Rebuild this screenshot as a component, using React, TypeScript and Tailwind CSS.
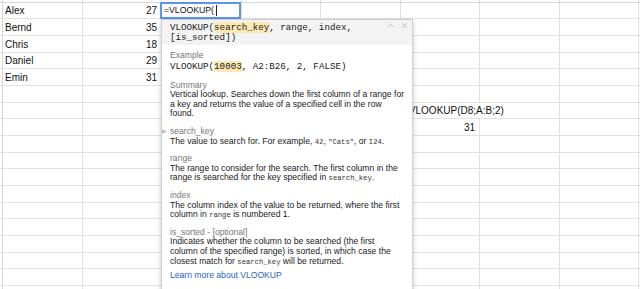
import { ChevronUp, X } from "lucide-react";

const colW = [
  "w-[3px]",
  "w-[80px]",
  "w-[79px]",
  "w-[80px]",
  "w-[79px]",
  "w-[80px]",
  "w-[79px]",
  "w-[80px]",
  "w-[79px]",
  "w-[40px]",
];

const rowH = ["h-[16px]", "h-[17px]", "h-[17px]"];

const people: Record<number, [string, string]> = {
  1: ["Alex", "27"],
  2: ["Bernd", "35"],
  3: ["Chris", "18"],
  4: ["Daniel", "29"],
  5: ["Emin", "31"],
};

function Code({ children }: { children: React.ReactNode }) {
  return (
    <span className="font-['Liberation_Mono',monospace] text-[7.2px] leading-none text-[#333]">{children}</span>
  );
}

function Section({ label, children, arrow }: { label: string; children: React.ReactNode; arrow?: boolean }) {
  return (
    <div className="relative mt-[8px]">
      {arrow && <span className="absolute left-[-8px] top-0 text-[6px] text-[#bbb]">▶</span>}
      <div className="text-[#777]">{label}</div>
      {children}
    </div>
  );
}

function Sheet() {
  const rows = Array.from({ length: 18 }, (_, i) => i);
  return (
    <div className="flex flex-col">
      {/* top strip */}
      <div className="flex h-[3px]">
        {colW.map((w, c) => (
          <div key={c} className={`${w} shrink-0 border-b border-r border-[#d6d6d6]`} />
        ))}
      </div>
      {rows.map((r) => {
        const row = r + 1;
        const h = rowH[r % 3];
        const cells = [];
        for (let c = 0; c < colW.length; c++) {
          if (row === 7 && c === 6) {
            // formula text overflows into the next column
            cells.push(
              <div key={c} className="w-[159px] shrink-0 border-b border-r border-[#e2e2e2] flex items-center pl-[2px] whitespace-nowrap">
                =VLOOKUP(D8;A:B;2)
              </div>
            );
            c++;
            continue;
          }
          let content: React.ReactNode = null;
          let align = "justify-start pl-[2px]";
          if (people[row] && c === 1) content = people[row][0];
          if (people[row] && c === 2) {
            content = people[row][1];
            align = "justify-end pr-[4px]";
          }
          if (row === 8 && c === 6) {
            content = "31";
            align = "justify-end pr-[4px]";
          }
          cells.push(
            <div
              key={c}
              className={`${colW[c]} shrink-0 border-b border-r flex items-center ${align} ${
                c === 0 ? "border-r-[#d6d6d6] border-b-[#e2e2e2]" : "border-[#e2e2e2]"
              }`}
            >
              {content}
            </div>
          );
        }
        return (
          <div key={r} className={`flex ${h}`}>
            {cells}
          </div>
        );
      })}
    </div>
  );
}

export default function App() {
  return (
    <div className="relative w-[640px] h-[289px] overflow-hidden bg-white font-['Liberation_Sans',Arial,sans-serif] text-[10px] text-[#111]">
      <Sheet />

      {/* cell editor */}
      <div className="absolute left-[160px] top-[2px] w-[81px] h-[17px] border-2 border-[#5b93f3] bg-white flex items-center pl-[2px] text-[8.7px] text-[#111]">
        =VLOOKUP(
        <span className="ml-[2px] w-px h-[11px] bg-[#222]" />
      </div>

      {/* formula help popup */}
      <div className="absolute left-[161px] top-[19px] w-[252px] bg-white border border-[#d0d0d0] shadow-[0_2px_5px_rgba(0,0,0,0.22)] text-[#1a1a1a]">
        <div className="relative bg-[#f3f3f3] pl-[8px] pr-[30px] pt-[3px] pb-[2px] font-['Liberation_Mono',monospace] text-[9.2px] leading-[10px] whitespace-nowrap">
          <div>
            VLOOKUP(<span className="bg-[#fce8b2]">search_key</span>, range, index,
          </div>
          <div>[is_sorted])</div>
          <div className="absolute top-[1px] right-[3px] flex items-center gap-[5px] text-[#9a9a9a]">
            <ChevronUp size={9} strokeWidth={1.6} />
            <X size={9} strokeWidth={1.6} />
          </div>
        </div>

        <div className="px-[8px] pt-[6px] pb-[10px] text-[8.6px] leading-[9.6px] whitespace-nowrap">
          <div className="text-[#777]">Example</div>
          <div className="font-['Liberation_Mono',monospace] text-[9.2px] leading-[11px]">
            VLOOKUP(<span className="bg-[#fce8b2]">10003</span>, A2:B26, 2, FALSE)
          </div>

          <div className="mt-[9px] text-[#777]">Summary</div>
          <div>Vertical lookup. Searches down the first column of a range for</div>
          <div>a key and returns the value of a specified cell in the row</div>
          <div>found.</div>

          <Section label="search_key" arrow>
            <div>
              The value to search for. For example, <Code>42</Code>, <Code>"Cats"</Code>, or <Code>I24</Code>.
            </div>
          </Section>

          <Section label="range">
            <div>The range to consider for the search. The first column in the</div>
            <div>
              range is searched for the key specified in <Code>search_key</Code>.
            </div>
          </Section>

          <Section label="index">
            <div>The column index of the value to be returned, where the first</div>
            <div>
              column in <Code>range</Code> is numbered 1.
            </div>
          </Section>

          <Section label="is_sorted - [optional]">
            <div>Indicates whether the column to be searched (the first</div>
            <div>column of the specified range) is sorted, in which case the</div>
            <div>
              closest match for <Code>search_key</Code> will be returned.
            </div>
          </Section>

          <div className="mt-[5px] text-[#1f5fcc]">Learn more about VLOOKUP</div>
        </div>
      </div>
    </div>
  );
}
